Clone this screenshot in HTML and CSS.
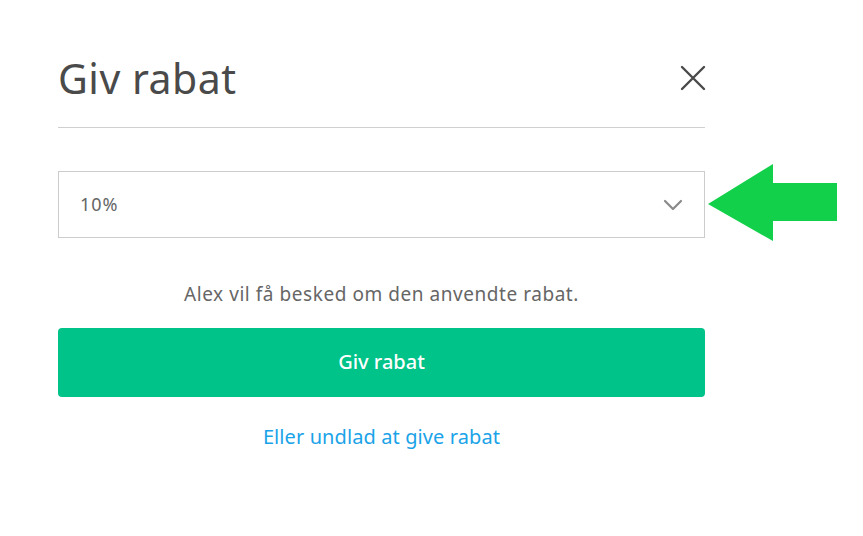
FILE: index.html
```html
<!DOCTYPE html>
<html lang="da">
<head>
<meta charset="utf-8">
<title>Giv rabat</title>
<link rel="stylesheet" href="styles.css">
</head>
<body>
<div class="modal">
  <div class="header">
    <h1 class="title">Giv rabat</h1>
    <button class="close" aria-label="Luk">
      <svg width="26" height="26" viewBox="0 0 26 26"><path d="M2 2 L24 24 M24 2 L2 24" stroke="#4a4a4a" stroke-width="2.4" stroke-linecap="round" fill="none"/></svg>
    </button>
  </div>
  <div class="divider"></div>
  <div class="select-wrap">
    <div class="select">
      <span class="value">10%</span>
      <svg class="chevron" width="20" height="12" viewBox="0 0 20 12"><path d="M2 2 L10 10 L18 2" stroke="#8a8a8a" stroke-width="2.2" fill="none" stroke-linecap="round" stroke-linejoin="round"/></svg>
    </div>
    <svg class="arrow" width="130" height="78" viewBox="0 0 130 78"><polygon points="0,40 65,0 65,19 129,19 129,57 65,57 65,77" fill="#12d04a"/></svg>
  </div>
  <p class="note">Alex vil få besked om den anvendte rabat.</p>
  <button class="primary">Giv rabat</button>
  <a class="link" href="#">Eller undlad at give rabat</a>
</div>
</body>
</html>
```
FILE: styles.css
```css
html, body {
  margin: 0;
  padding: 0;
  background: #fff;
}
body {
  font-family: "Noto Sans", sans-serif;
  color: #4a4a4a;
}
.modal {
  width: 647px;
  margin-left: 58px;
  padding-top: 52px;
  display: flex;
  flex-direction: column;
}
.header {
  display: flex;
  justify-content: space-between;
  align-items: center;
  height: 52px;
}
.title {
  margin: 0;
  font-size: 41px;
  font-weight: 400;
  color: #4a4a4a;
  line-height: 52px;
  letter-spacing: 0.5px;
}
.close {
  border: 0;
  background: none;
  padding: 0;
  width: 26px;
  height: 26px;
  margin-right: -1px;
  display: flex;
}
.divider {
  height: 1px;
  background: #cfcfcf;
  margin-top: 23px;
}
.select-wrap {
  position: relative;
  margin-top: 43px;
}
.select {
  height: 65px;
  border: 1px solid #cccccc;
  display: flex;
  align-items: center;
  justify-content: space-between;
  padding: 0 21px 0 21px;
}
.value {
  font-size: 18px;
  color: #666;
  letter-spacing: 1px;
  padding-bottom: 2px;
}
.chevron {
  display: block;
}
.arrow {
  position: absolute;
  left: 650px;
  top: -7px;
}
.note {
  margin: 44px 0 0;
  text-align: center;
  font-size: 19px;
  color: #666;
  line-height: 24px;
  letter-spacing: 0.55px;
}
.primary {
  margin-top: 22px;
  height: 69px;
  border: 0;
  border-radius: 4px;
  background: #00c389;
  color: #fff;
  font-family: inherit;
  font-size: 20px;
  font-weight: 500;
  padding-bottom: 4px;
}
.link {
  margin-top: 27px;
  text-align: center;
  color: #1aa3e8;
  text-decoration: none;
  font-size: 20px;
  line-height: 26px;
  letter-spacing: 0.1px;
}
```
